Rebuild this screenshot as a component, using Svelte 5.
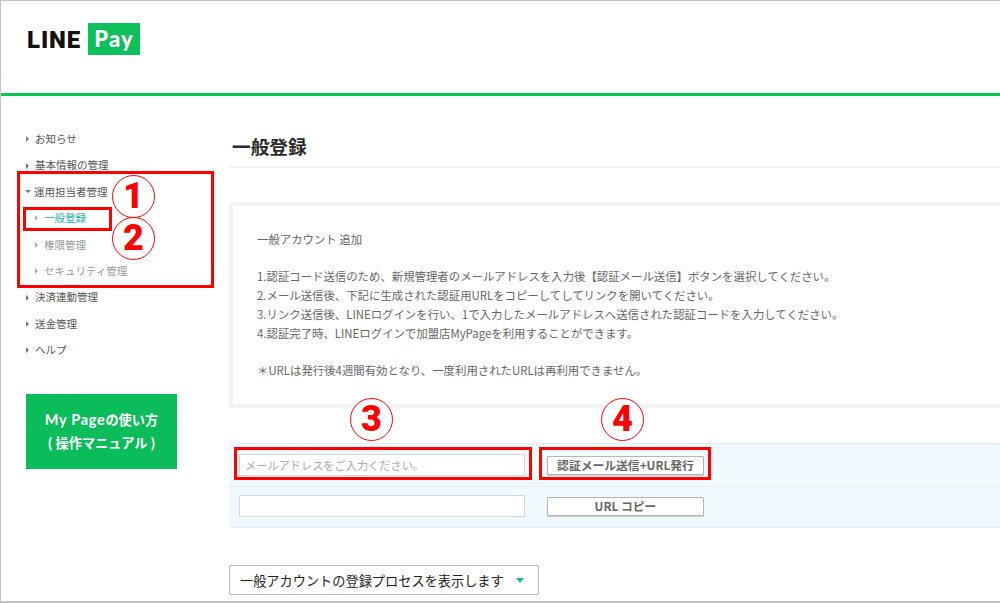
<script>
  const nav = [
    { label: "お知らせ" },
    { label: "基本情報の管理" },
    {
      label: "運用担当者管理",
      open: true,
      children: [
        { label: "一般登録", active: true },
        { label: "権限管理" },
        { label: "セキュリティ管理" }
      ]
    },
    { label: "決済連動管理" },
    { label: "送金管理" },
    { label: "ヘルプ" }
  ];

  const steps = [
    "1.認証コード送信のため、新規管理者のメールアドレスを入力後【認証メール送信】ボタンを選択してください。",
    "2.メール送信後、下記に生成された認証用URLをコピーしてしてリンクを開いてください。",
    "3.リンク送信後、LINEログインを行い、1で入力したメールアドレスへ送信された認証コードを入力してください。",
    "4.認証完了時、LINEログインで加盟店MyPageを利用することができます。"
  ];
</script>

<div class="page">
  <header>
    <span class="line">LINE</span>
    <span class="pay">Pay</span>
  </header>

  <div class="body">
    <aside>
      <ul class="nav">
        {#each nav as item}
          <li class="item"><i class="arrow" class:down={item.open}></i>{item.label}</li>
          {#if item.children}
            {#each item.children as sub}
              <li class="item sub" class:active={sub.active}><i class="arrow"></i>{sub.label}</li>
            {/each}
          {/if}
        {/each}
      </ul>
      <div class="manual">
        <span class="latin">My Page</span>の使い方<br />( 操作マニュアル )
      </div>
    </aside>

    <main>
      <h1>一般登録</h1>

      <section class="notice">
        <p class="lead">一般アカウント 追加</p>
        {#each steps as step}
          <p>{step}</p>
        {/each}
        <p class="note">＊URLは発行後4週間有効となり、一度利用されたURLは再利用できません。</p>
      </section>

      <div class="form">
        <div class="row">
          <input type="text" placeholder="メールアドレスをご入力ください。" />
          <button>認証メール送信+URL発行</button>
        </div>
        <div class="row">
          <input type="text" />
          <button>URL コピー</button>
        </div>
      </div>

      <div class="process">
        一般アカウントの登録プロセスを表示します
        <i class="caret"></i>
      </div>
    </main>
  </div>

  <!-- red annotations on top of the screenshot -->
  <div class="mark mark-group"></div>
  <div class="mark mark-item"></div>
  <div class="mark mark-input"></div>
  <div class="mark mark-send"></div>
  <span class="num num1">1</span>
  <span class="num num2">2</span>
  <span class="num num3">3</span>
  <span class="num num4">4</span>
</div>

<style>
  :global(body) {
    margin: 0;
    background: #fff;
  }
  .page {
    position: relative;
    box-sizing: border-box;
    width: 1000px;
    height: 603px;
    overflow: hidden;
    background: #fff;
    border-top: 1px solid #c4c4c4;
    border-left: 1px solid #c4c4c4;
    border-bottom: 2px solid #c4c4c4;
    font-family: "Noto Sans CJK JP", "Liberation Sans", sans-serif;
    color: #555;
  }
  header {
    box-sizing: border-box;
    height: 95px;
    border-bottom: 3px solid #08c756;
    padding: 22px 0 0 26px;
    display: flex;
    align-items: flex-start;
    gap: 7px;
  }
  .line {
    margin-top: 2px;
    font: 900 24px/30px Roboto, sans-serif;
    color: #111;
    letter-spacing: 0.9px;
  }
  .pay {
    box-sizing: border-box;
    width: 52px;
    height: 32px;
    border-radius: 1px;
    background: #0dc05b;
    color: #fff;
    font: 900 22px/31px Lato, sans-serif;
    letter-spacing: 1.2px;
    text-align: center;
  }
  .body {
    display: flex;
  }
  aside {
    flex: none;
    width: 228px;
    padding-top: 30px;
    box-sizing: border-box;
  }
  .nav {
    list-style: none;
    margin: 0;
    padding: 0 0 0 25px;
  }
  .item {
    height: 26.4px;
    line-height: 26.4px;
    font-size: 10.5px;
    white-space: nowrap;
    display: flex;
    align-items: center;
  }
  .arrow {
    flex: none;
    width: 0;
    height: 0;
    margin-right: 6px;
    border-left: 3px solid #777;
    border-top: 3px solid transparent;
    border-bottom: 3px solid transparent;
  }
  .arrow.down {
    margin: 0 3px 0 -1px;
    border-left: 3.5px solid transparent;
    border-right: 3.5px solid transparent;
    border-top: 3px solid #777;
    border-bottom: 0;
  }
  .sub {
    padding-left: 9px;
    color: #999;
  }
  .sub .arrow {
    border-left-color: #aaa;
  }
  .active {
    color: #17b5ac;
  }
  .manual {
    box-sizing: border-box;
    width: 151px;
    height: 75px;
    margin: 30px 0 0 25px;
    padding-top: 14px;
    background: #0bbd5a;
    color: #fff;
    font-size: 13.2px;
    font-weight: 700;
    line-height: 23px;
    text-align: center;
  }
  .latin {
    font-family: Lato, sans-serif;
    font-size: 14.5px;
    letter-spacing: 0.7px;
  }
  main {
    flex: none;
    width: 771px;
  }
  h1 {
    box-sizing: border-box;
    height: 72px;
    margin: 0;
    padding: 33px 0 0 3px;
    border-bottom: 2px solid #f3f3f3;
    font-size: 18.7px;
    line-height: 34px;
    font-weight: 700;
    color: #2b2b2b;
  }
  .notice {
    box-sizing: border-box;
    height: 206px;
    margin-top: 34px;
    padding: 24px 0 0 24px;
    border: 4px solid #f3f3f3;
    border-right: 0;
    font-size: 11.4px;
    line-height: 18.7px;
    color: #666;
  }
  .notice p {
    margin: 0;
    white-space: nowrap;
  }
  .lead {
    margin-bottom: 18.7px !important;
  }
  .note {
    margin-top: 18.7px !important;
  }
  .form {
    margin-top: 35px;
    background: #f0f9fd;
    border-top: 1px solid #e6eff3;
    border-bottom: 1px solid #e6eff3;
  }
  .row {
    box-sizing: border-box;
    height: 42px;
    display: flex;
    align-items: center;
    padding-left: 10px;
    gap: 22px;
  }
  .row + .row {
    height: 41px;
    padding-bottom: 2px;
    border-top: 1px solid #e6eff3;
  }
  input {
    box-sizing: border-box;
    width: 286px;
    height: 22px;
    padding: 0 5px;
    background: #fff;
    border: 1px solid #d6d6d6;
    outline: none;
    font-family: inherit;
    font-size: 11.2px;
  }
  input::placeholder {
    color: #aaa;
    opacity: 1;
  }
  button {
    box-sizing: border-box;
    width: 157px;
    height: 19px;
    padding: 0;
    background: #fff;
    border: 1px solid #b5b5b5;
    border-radius: 1px;
    box-shadow: 0 1px 1px #ccc;
    font-family: inherit;
    font-size: 11.8px;
    font-weight: 700;
    line-height: 16px;
    color: #666;
  }
  .process {
    box-sizing: border-box;
    width: 310px;
    height: 30px;
    margin-top: 37px;
    padding-left: 10px;
    display: flex;
    align-items: center;
    border: 1px solid #bbb;
    border-radius: 2px;
    font-size: 13.2px;
    color: #222;
    white-space: nowrap;
  }
  .caret {
    width: 0;
    height: 0;
    margin-left: 12px;
    border-left: 4.5px solid transparent;
    border-right: 4.5px solid transparent;
    border-top: 5px solid #17b5ac;
  }
  .mark {
    position: absolute;
    box-sizing: border-box;
    border: 3px solid #f00;
  }
  .mark-group {
    left: 16px;
    top: 170px;
    width: 197px;
    height: 117px;
  }
  .mark-item {
    left: 22px;
    top: 206px;
    width: 89px;
    height: 24px;
  }
  .mark-input {
    left: 233px;
    top: 446px;
    width: 298px;
    height: 33px;
  }
  .mark-send {
    left: 538px;
    top: 446px;
    width: 172px;
    height: 33px;
  }
  .num {
    position: absolute;
    box-sizing: border-box;
    width: 43px;
    height: 43px;
    border: 1.5px solid #f00;
    border-radius: 50%;
    background: #fff;
    color: #f00;
    font: 900 36px/40px Roboto, sans-serif;
    text-align: center;
  }
  .num1 {
    left: 111px;
    top: 174px;
  }
  .num2 {
    left: 111px;
    top: 216px;
  }
  .num3 {
    left: 349px;
    top: 397px;
  }
  .num4 {
    left: 600px;
    top: 397px;
  }
</style>
